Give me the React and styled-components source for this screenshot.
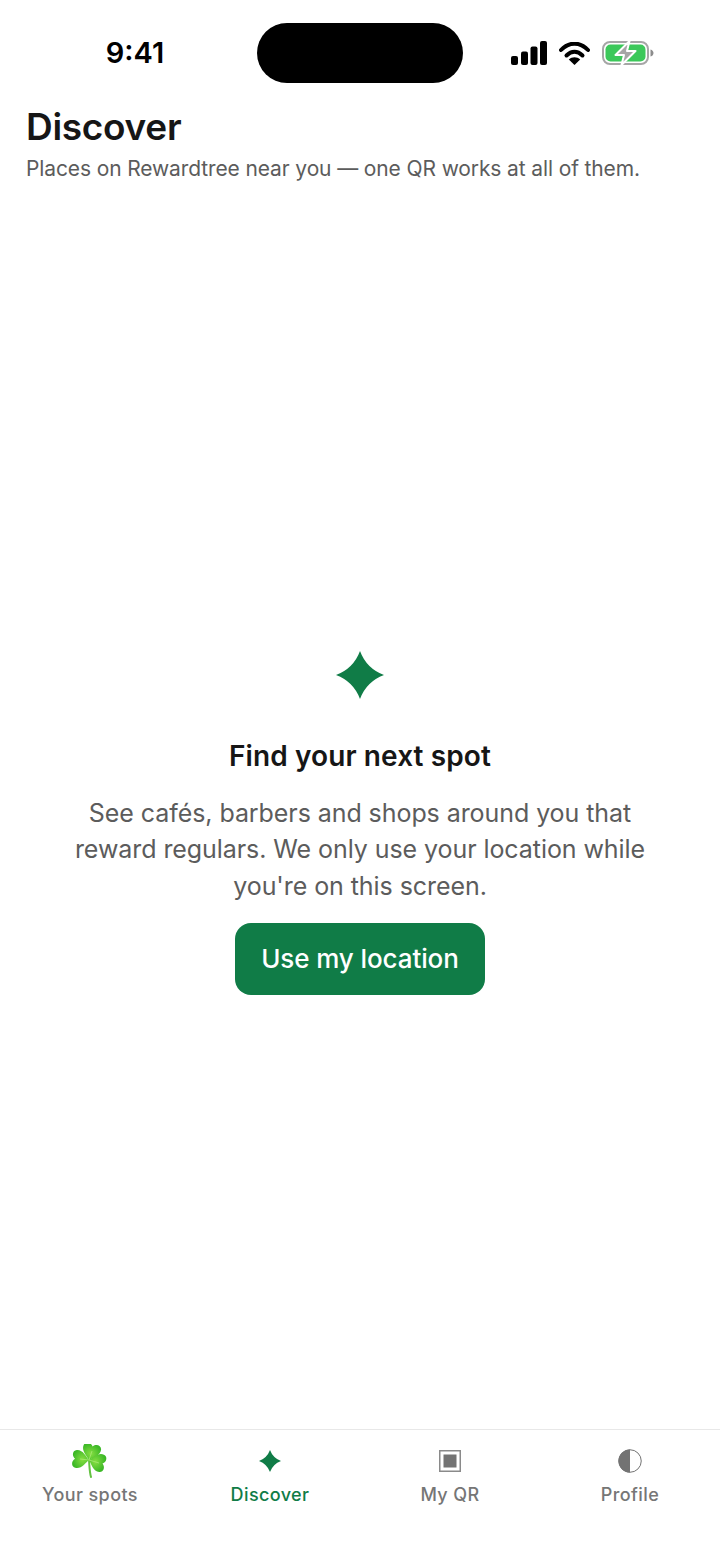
import React from "react";
import styled, { createGlobalStyle } from "styled-components";

const Global = createGlobalStyle`
  html, body { margin: 0; padding: 0; background: #fff; }
  body { font-family: Inter, "Liberation Sans", sans-serif; -webkit-font-smoothing: antialiased; }
  * { box-sizing: border-box; }
`;

const Screen = styled.div`
  width: 720px;
  height: 1565px;
  display: flex;
  flex-direction: column;
  background: #fff;
  overflow: hidden;
`;

const StatusBar = styled.div`
  height: 105px;
  flex: none;
  display: grid;
  grid-template-columns: 257px 206px 257px;
  padding-top: 23px;
`;

const Time = styled.div`
  font-size: 29px;
  font-weight: 600;
  line-height: 60px;
  color: #000;
  text-align: center;
  padding-left: 13px;
`;

const Island = styled.div`
  width: 206px;
  height: 60px;
  border-radius: 30px;
  background: #000;
`;

const StatusIcons = styled.div`
  height: 60px;
  display: flex;
  align-items: center;
  padding: 0 0 0 48px;
  gap: 12px;
`;

const Header = styled.header`
  flex: none;
  padding: 0 26px;
`;

const Title = styled.h1`
  margin: 0;
  font-size: 37px;
  line-height: 44px;
  font-weight: 600;
  color: #161616;
  letter-spacing: -0.3px;
`;

const Subtitle = styled.p`
  margin: 5px 0 0;
  font-size: 21px;
  line-height: 30px;
  font-weight: 400;
  color: #5c5c5c;
  letter-spacing: -0.12px;
`;

const Main = styled.main`
  flex: 1;
  min-height: 0;
  display: flex;
  flex-direction: column;
  align-items: center;
  justify-content: center;
  padding: 33px 60px 0;
  text-align: center;
`;

const EmptyTitle = styled.h2`
  margin: 39px 0 0;
  font-size: 28px;
  line-height: 36px;
  font-weight: 600;
  color: #161616;
  letter-spacing: 0.1px;
`;

const EmptyText = styled.p`
  margin: 21px 0 0;
  font-size: 25px;
  line-height: 36.2px;
  font-weight: 400;
  color: #5c5c5c;
  letter-spacing: -0.07px;
`;

const PrimaryButton = styled.button`
  margin-top: 19px;
  width: 250px;
  height: 72px;
  border: 0;
  border-radius: 16px;
  background: #107c47;
  color: #fff;
  font: 550 26px/34px Inter, "Liberation Sans", sans-serif;
  letter-spacing: -0.1px;
`;

const TabBar = styled.nav`
  flex: none;
  height: 136px;
  border-top: 1px solid #e8e8e8;
  display: grid;
  grid-template-columns: repeat(4, 1fr);
  padding-top: 12px;
`;

const Tab = styled.div`
  display: flex;
  flex-direction: column;
  align-items: center;
  color: ${(p) => (p.$active ? "#107c47" : "#767676")};
`;

const TabIcon = styled.div`
  height: 38px;
  display: flex;
  align-items: center;
  justify-content: center;
`;

const TabLabel = styled.span`
  margin-top: 3px;
  font-size: 18px;
  line-height: 24px;
  font-weight: 550;
  letter-spacing: 0.4px;
`;

const Sparkle = ({ size, color = "#107c47" }) => (
  <svg width={size} height={size} viewBox="0 0 48 48" aria-hidden="true">
    <path d="M24 0Q30.500 17.500 48 24Q30.500 30.500 24 48Q17.500 30.500 0 24Q17.500 17.500 24 0Z" fill={color} />
  </svg>
);

const Signal = () => (
  <svg width="36" height="24" viewBox="0 0 36 24" aria-hidden="true">
    <rect x="0" y="15" width="7" height="9" rx="2" fill="#000" />
    <rect x="10" y="10.5" width="7" height="13.5" rx="2" fill="#000" />
    <rect x="19.500" y="5.5" width="7" height="18.5" rx="2" fill="#000" />
    <rect x="29" y="0" width="7" height="24" rx="2" fill="#000" />
  </svg>
);

const Wifi = () => (
  <svg width="31" height="23" viewBox="0 0 31 23" aria-hidden="true">
    <path d="M2 8C10-.5 21-.5 29 8" fill="none" stroke="#000" strokeWidth="4" strokeLinecap="round" />
    <path d="M7.5 13.5C12.5 8.5 18.5 8.5 23.5 13.5" fill="none" stroke="#000" strokeWidth="4" strokeLinecap="round" />
    <path d="M15.5 23L9.8 17.6C13 14.6 18 14.6 21.2 17.600Z" fill="#000" />
  </svg>
);

const Battery = () => (
  <svg width="52" height="24" viewBox="0 0 52 24" aria-hidden="true">
    <rect x="1" y="1" width="45" height="22" rx="7" fill="#fff" stroke="#a6a6a6" strokeWidth="2" />
    <rect x="3.5" y="3.5" width="40" height="17" rx="5" fill="#3cc85a" />
    <path d="M48.5 8.5C50.5 9 51.5 10.5 51.5 12C51.5 13.5 50.5 15 48.5 15.5Z" fill="#8c8c8c" />
    <path d="M27.5 0L13.5 14H22L19.5 24L33.5 10H25Z" fill="#a6a6a6" stroke="#fff" strokeWidth="2" strokeLinejoin="round" />
  </svg>
);

const LEAF = "M0 0C-3-3-10-7-9-13C-8.500-17-3-18 0-14C3-18 8.500-17 9-13C10-7 3-3 0 0Z";

const Shamrock = () => (
  <svg width="36" height="34" viewBox="0 0 36 34" aria-hidden="true">
    <defs>
      <radialGradient id="leaf" cx="0.5" cy="0.6" r="0.6">
        <stop offset="0" stopColor="#86de42" />
        <stop offset="1" stopColor="#3cb826" />
      </radialGradient>
    </defs>
    <path d="M17 16C17.500 22 17.500 28 19 33" fill="none" stroke="#63c241" strokeWidth="2" strokeLinecap="round" />
    <g transform="translate(17 16)">
      <path d={LEAF} fill="url(#leaf)" transform="rotate(15)" />
      <path d={LEAF} fill="url(#leaf)" transform="rotate(-85)" />
      <path d={LEAF} fill="url(#leaf)" transform="rotate(105)" />
      <path d="M0 0L3-9M0 0L-9-1M0 0L10 3" stroke="#a8e874" strokeWidth="0.800" fill="none" />
    </g>
  </svg>
);

const QrIcon = () => (
  <svg width="22" height="22" viewBox="0 0 22 22" aria-hidden="true">
    <rect x="0.750" y="0.750" width="20.500" height="20.500" fill="none" stroke="#8a8a8a" strokeWidth="1.500" />
    <rect x="4.500" y="4.500" width="13" height="13" fill="#737373" />
  </svg>
);

const ProfileIcon = () => (
  <svg width="24" height="24" viewBox="0 0 24 24" aria-hidden="true">
    <circle cx="12" cy="12" r="11.250" fill="#fff" stroke="#737373" strokeWidth="1" />
    <path d="M12 .5A11.500 11.500 0 0 0 12 23.500Z" fill="#737373" />
  </svg>
);

export default function App() {
  return (
    <Screen>
      <Global />
      <StatusBar>
        <Time>9:41</Time>
        <Island />
        <StatusIcons>
          <Signal />
          <Wifi />
          <Battery />
        </StatusIcons>
      </StatusBar>
      <Header>
        <Title>Discover</Title>
        <Subtitle>Places on Rewardtree near you — one QR works at all of them.</Subtitle>
      </Header>
      <Main>
        <Sparkle size={48} />
        <EmptyTitle>Find your next spot</EmptyTitle>
        <EmptyText>
          See cafés, barbers and shops around you that reward regulars. We only use your location while you're on this screen.
        </EmptyText>
        <PrimaryButton>Use my location</PrimaryButton>
      </Main>
      <TabBar>
        <Tab>
          <TabIcon><Shamrock /></TabIcon>
          <TabLabel>Your spots</TabLabel>
        </Tab>
        <Tab $active>
          <TabIcon><Sparkle size={22} /></TabIcon>
          <TabLabel>Discover</TabLabel>
        </Tab>
        <Tab>
          <TabIcon><QrIcon /></TabIcon>
          <TabLabel>My QR</TabLabel>
        </Tab>
        <Tab>
          <TabIcon><ProfileIcon /></TabIcon>
          <TabLabel>Profile</TabLabel>
        </Tab>
      </TabBar>
    </Screen>
  );
}
